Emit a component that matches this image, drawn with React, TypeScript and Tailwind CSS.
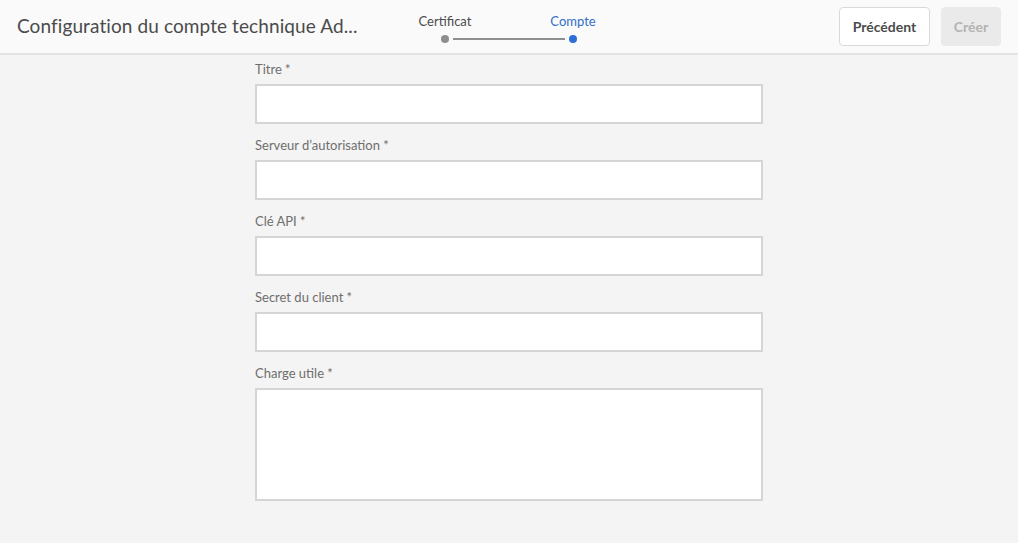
import { useState } from "react";

type Field = {
  id: string;
  label: string;
  multiline?: boolean;
};

const fields: Field[] = [
  { id: "title", label: "Titre" },
  { id: "authServer", label: "Serveur d’autorisation" },
  { id: "apiKey", label: "Clé API" },
  { id: "clientSecret", label: "Secret du client" },
  { id: "payload", label: "Charge utile", multiline: true },
];

export default function App() {
  const [values, setValues] = useState<Record<string, string>>({});

  function update(id: string, v: string) {
    setValues((prev) => ({ ...prev, [id]: v }));
  }

  return (
    <div
      className="min-h-[543px] bg-[#f4f4f4] text-[#4b4b4b]"
      style={{ fontFamily: "Lato, 'Open Sans', sans-serif" }}
    >
      {/* Barre du haut */}
      <header className="h-[55px] bg-[#fafafa] border-b-2 border-[#e4e4e4] flex items-center pl-[17px] pr-[17px]">
        <h1 className="w-[400px] text-[19px] text-[#4b4b4b] tracking-[0.1px] whitespace-nowrap">
          Configuration du compte technique Ad...
        </h1>

        {/* Étapes */}
        <div className="flex flex-col mt-[2px]">
          <div className="flex gap-[72px]">
            <span className="w-[56px] text-center text-[13px] leading-[16px] text-[#4b4b4b]">Certificat</span>
            <span className="w-[56px] text-center text-[13px] leading-[16px] text-[#326ec8]">Compte</span>
          </div>
          <div className="flex items-center pl-[24px] mt-[6px] gap-[4px]">
            <span className="w-[8px] h-[8px] rounded-full bg-[#8e8e8e]" />
            <span className="w-[112px] h-[2px] bg-[#8e8e8e]" />
            <span className="w-[8px] h-[8px] rounded-full bg-[#2d6fd6]" />
          </div>
        </div>

        <div className="ml-auto flex items-center gap-[11px] mt-[-1px]">
          <button className="h-[39px] w-[91px] rounded-[4px] border border-[#d9d9d9] bg-white text-[14px] font-bold text-[#4b4b4b]">
            Précédent
          </button>
          <button
            disabled
            className="h-[39px] w-[60px] rounded-[4px] border border-[#eaeaea] bg-[#eaeaea] text-[14px] font-bold text-[#b3b3b3]"
          >
            Créer
          </button>
        </div>
      </header>

      {/* Formulaire */}
      <form className="w-[508px] ml-[255px] pt-[5px] flex flex-col">
        {fields.map((f) => (
          <div key={f.id} className="flex flex-col mb-[12px]">
            <label htmlFor={f.id} className="text-[13px] leading-[18px] text-[#6e6e6e] mb-[6px]">
              {f.label} *
            </label>
            {f.multiline ? (
              <textarea
                id={f.id}
                value={values[f.id] || ""}
                onChange={(e) => update(f.id, e.target.value)}
                className="h-[113px] bg-white border-2 border-[#d5d5d5] resize-none outline-none px-2 py-1 text-[14px]"
              />
            ) : (
              <input
                id={f.id}
                type="text"
                value={values[f.id] || ""}
                onChange={(e) => update(f.id, e.target.value)}
                className="h-[40px] bg-white border-2 border-[#d5d5d5] outline-none px-2 text-[14px]"
              />
            )}
          </div>
        ))}
      </form>
    </div>
  );
}
